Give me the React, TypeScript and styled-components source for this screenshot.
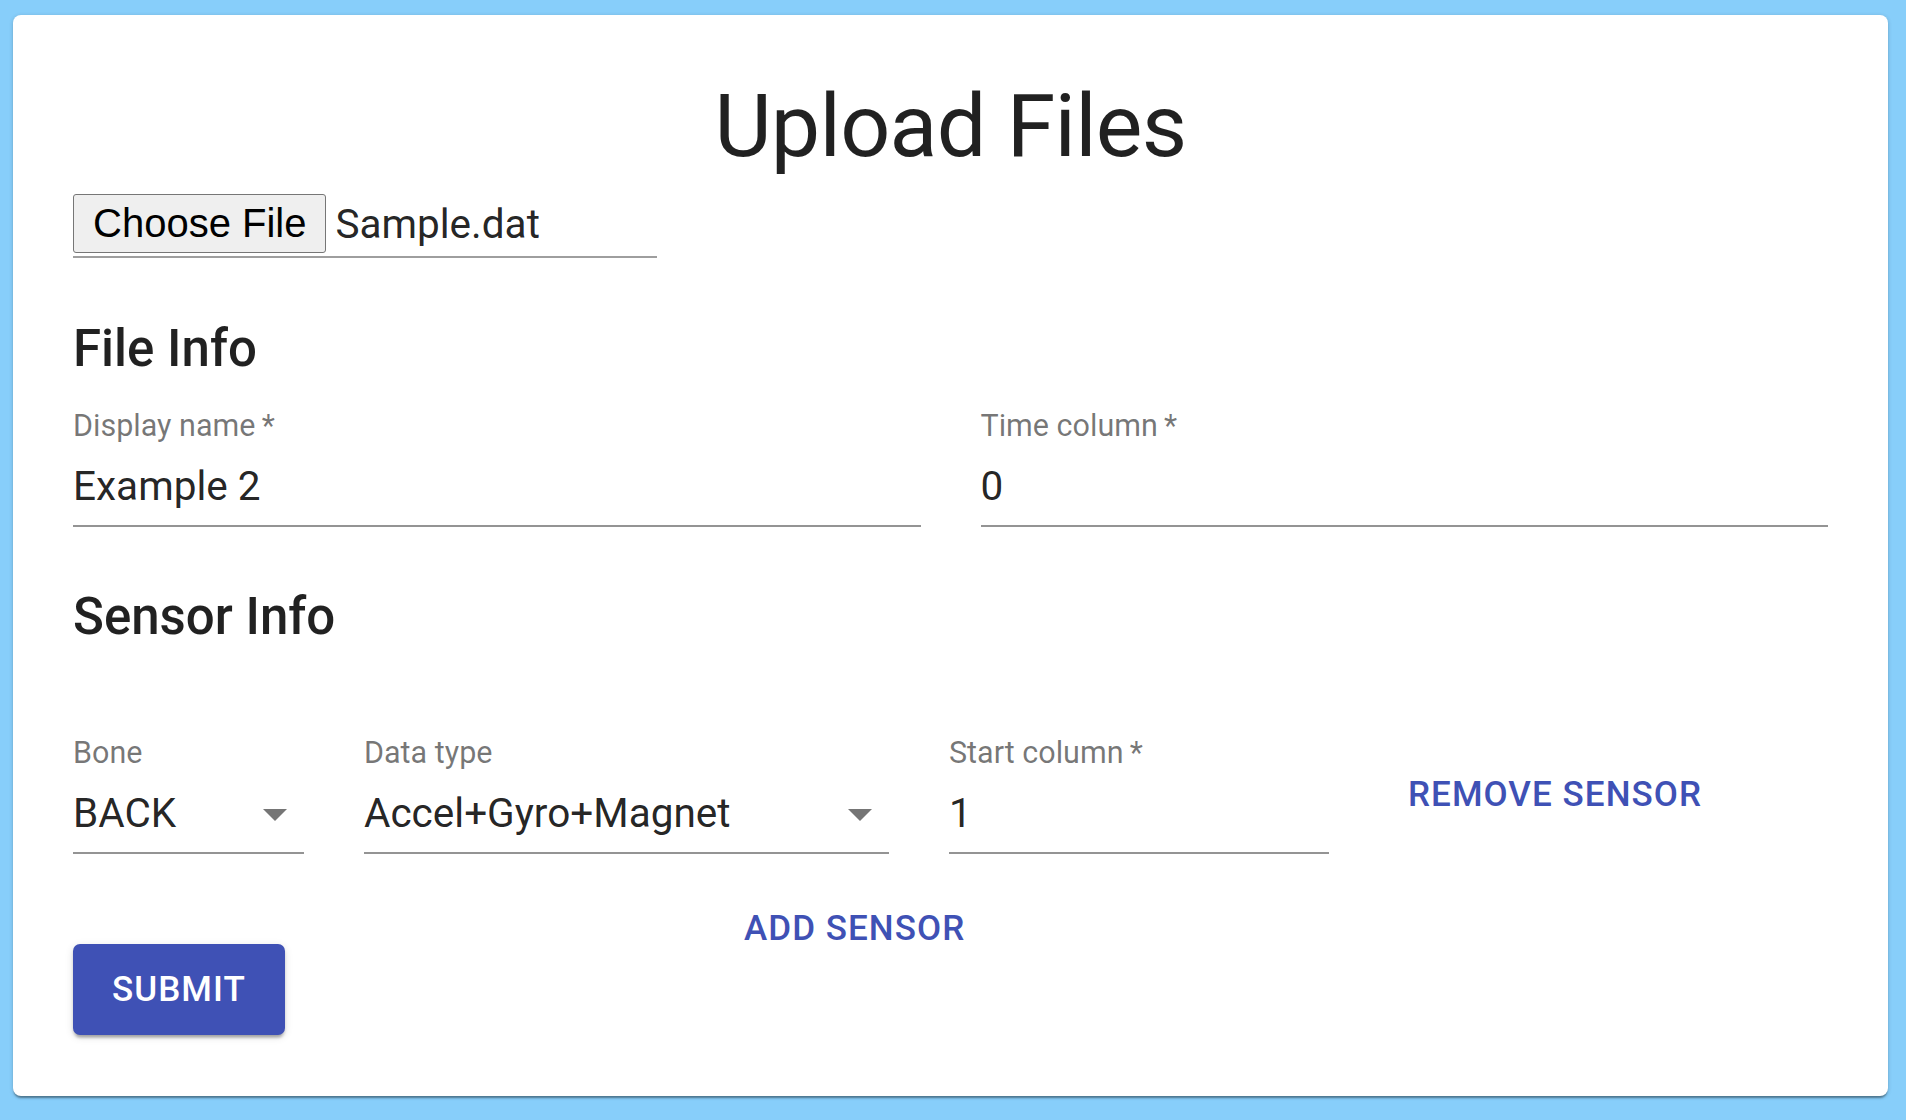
import React from "react";
import styled, { createGlobalStyle } from "styled-components";

const GlobalStyle = createGlobalStyle`
  html, body {
    margin: 0;
    padding: 0;
    background: #87cefa;
  }
  body {
    font-family: Roboto, "Liberation Sans", Arial, sans-serif;
    color: rgba(0, 0, 0, 0.87);
  }
  * { box-sizing: border-box; }
`;

const Page = styled.div`
  padding: 15px 18px 24px 13px;
`;

const Card = styled.main`
  background: #ffffff;
  border-radius: 8px;
  box-shadow: 0 3px 2px -1px rgba(0, 0, 0, 0.35), 0 1px 4px rgba(0, 0, 0, 0.18);
  padding: 57px 60px 61px 60px;
  display: flex;
  flex-direction: column;
`;

const Title = styled.h1`
  margin: 0;
  font-family: Roboto, sans-serif;
  font-weight: 400;
  font-size: 88px;
  line-height: 108px;
  letter-spacing: -0.75px;
  text-align: center;
  color: rgba(0, 0, 0, 0.87);
`;

const FileRow = styled.div`
  margin-top: 14px;
  width: 584px;
  display: flex;
  align-items: center;
  padding-bottom: 3px;
  border-bottom: 2px solid #9e9e9e;
`;

const FileButton = styled.button`
  height: 59px;
  padding: 0 19px;
  background: #efefef;
  border: 1px solid #767676;
  border-radius: 3px;
  font-family: "Liberation Sans", Arial, sans-serif;
  font-size: 40px;
  color: #000000;
  cursor: pointer;
`;

const FileName = styled.span`
  margin-left: 9px;
  font-family: Roboto, sans-serif;
  font-size: 40.5px;
  color: rgba(0, 0, 0, 0.87);
`;

const SectionHeading = styled.h2<{ $gap: number }>`
  margin: ${(p) => p.$gap}px 0 0 0;
  font-family: Roboto, sans-serif;
  font-weight: 500;
  font-size: 51px;
  line-height: 63px;
  color: rgba(0, 0, 0, 0.87);
`;

const FieldGrid = styled.div`
  margin-top: 29px;
  display: grid;
  grid-template-columns: 1fr 1fr;
  column-gap: 60px;
`;

const Field = styled.div<{ $width?: number }>`
  display: flex;
  flex-direction: column;
  width: ${(p) => (p.$width ? `${p.$width}px` : "auto")};
  flex: none;
`;

const Label = styled.label`
  font-family: Roboto, sans-serif;
  font-size: 30.5px;
  line-height: 34px;
  color: rgba(0, 0, 0, 0.54);
  white-space: nowrap;
`;

const Control = styled.div`
  margin-top: 20px;
  padding-bottom: 16px;
  border-bottom: 2px solid #949494;
  display: flex;
  align-items: center;
`;

const Value = styled.span`
  font-family: Roboto, sans-serif;
  font-size: 40.5px;
  line-height: 46px;
  color: rgba(0, 0, 0, 0.87);
  white-space: nowrap;
`;

const Arrow = styled.svg`
  margin-left: auto;
  margin-right: 17px;
  margin-top: 3px;
  width: 24px;
  height: 12px;
  fill: #757575;
  flex: none;
`;

const SensorRow = styled.div`
  margin-top: 88px;
  display: flex;
  align-items: center;
  gap: 60px;
`;

const TextButton = styled.button`
  background: none;
  border: none;
  padding: 0 19px;
  font-family: Roboto, sans-serif;
  font-weight: 500;
  font-size: 35px;
  line-height: 30px;
  letter-spacing: 0.03em;
  text-transform: uppercase;
  color: #3f51b5;
  cursor: pointer;
`;

const AddRow = styled.div`
  margin-top: 60px;
  padding-left: 652px;
  display: flex;
`;

const SubmitButton = styled.button`
  align-self: flex-start;
  height: 91px;
  padding: 0 39px;
  background: #3f51b5;
  border: none;
  border-radius: 7px;
  font-family: Roboto, sans-serif;
  font-weight: 500;
  font-size: 35px;
  letter-spacing: 0.03em;
  text-transform: uppercase;
  color: #ffffff;
  cursor: pointer;
  box-shadow: 0 5px 3px -3px rgba(0, 0, 0, 0.2), 0 3px 3px 0 rgba(0, 0, 0, 0.14),
    0 2px 8px 0 rgba(0, 0, 0, 0.12);
`;

const DropArrow = () => (
  <Arrow viewBox="0 0 10 5" aria-hidden="true">
    <path d="M0 0 L5 5 L10 0 Z" />
  </Arrow>
);

type FieldDef = { label: string; value: string; width?: number; select?: boolean };

const FormField = ({ label, value, width, select }: FieldDef) => (
  <Field $width={width}>
    <Label>{label}</Label>
    <Control>
      <Value>{value}</Value>
      {select && <DropArrow />}
    </Control>
  </Field>
);

const sensorFields: FieldDef[] = [
  { label: "Bone", value: "BACK", width: 231, select: true },
  { label: "Data type", value: "Accel+Gyro+Magnet", width: 525, select: true },
  { label: "Start column\u2009*", value: "1", width: 380 },
];

export default function App() {
  return (
    <>
      <GlobalStyle />
      <Page>
        <Card>
          <Title>Upload Files</Title>
          <FileRow>
            <FileButton type="button">Choose File</FileButton>
            <FileName>Sample.dat</FileName>
          </FileRow>

          <SectionHeading $gap={59}>File Info</SectionHeading>
          <FieldGrid>
            <FormField label={"Display name\u2009*"} value="Example 2" />
            <FormField label={"Time column\u2009*"} value="0" />
          </FieldGrid>

          <SectionHeading $gap={58}>Sensor Info</SectionHeading>
          <SensorRow>
            {sensorFields.map((f) => (
              <FormField key={f.label} {...f} />
            ))}
            <TextButton type="button">Remove Sensor</TextButton>
          </SensorRow>

          <AddRow>
            <TextButton type="button">Add Sensor</TextButton>
          </AddRow>

          <SubmitButton type="button">Submit</SubmitButton>
        </Card>
      </Page>
    </>
  );
}
